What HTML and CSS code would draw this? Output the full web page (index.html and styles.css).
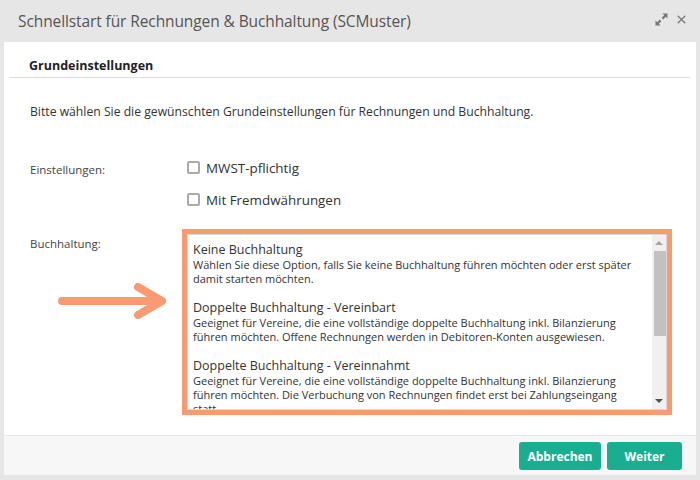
FILE: index.html
```html
<!DOCTYPE html>
<html lang="de">
<head>
<meta charset="utf-8">
<title>Schnellstart</title>
<link rel="stylesheet" href="styles.css">
</head>
<body>
<div class="dialog">
  <div class="titlebar">
    <div class="title">Schnellstart für Rechnungen &amp; Buchhaltung (SCMuster)</div>
    <div class="tools">
      <svg class="ico-max" width="13" height="13" viewBox="0 0 13 13">
        <path d="M7.5 0.5h5v5l-1.7-1.7-2.6 2.6-1.6-1.6 2.6-2.6z" fill="#777"/>
        <path d="M5.5 12.5h-5v-5l1.7 1.7 2.6-2.6 1.6 1.6-2.6 2.6z" fill="#777"/>
      </svg>
      <svg class="ico-close" width="9" height="9" viewBox="0 0 9 9">
        <path d="M0.7 0.7l7.6 7.6M8.3 0.7l-7.6 7.6" stroke="#7a7a7a" stroke-width="1.3"/>
      </svg>
    </div>
  </div>
  <div class="panel">
    <div class="content">
      <div class="section-head">Grundeinstellungen</div>
      <p class="intro">Bitte wählen Sie die gewünschten Grundeinstellungen für Rechnungen und Buchhaltung.</p>
      <div class="form">
        <div class="label">Einstellungen:</div>
        <div class="checks">
          <label class="check"><span class="box"></span>MWST-pflichtig</label>
          <label class="check"><span class="box"></span>Mit Fremdwährungen</label>
        </div>
        <div class="label label-bh">
          <span>Buchhaltung:</span>
          <svg class="arrow" width="112" height="36" viewBox="0 0 112 36">
            <path d="M4 18H104M80 4L104 18L80 32" fill="none" stroke="#f89a72" stroke-width="8" stroke-linecap="round" stroke-linejoin="round"/>
          </svg>
        </div>
        <div class="highlight">
          <div class="listbox">
            <div class="options">
              <div class="opt">
                <div class="opt-title">Keine Buchhaltung</div>
                <div class="opt-desc">Wählen Sie diese Option, falls Sie keine Buchhaltung führen möchten oder erst später damit starten möchten.</div>
              </div>
              <div class="opt">
                <div class="opt-title">Doppelte Buchhaltung - Vereinbart</div>
                <div class="opt-desc">Geeignet für Vereine, die eine vollständige doppelte Buchhaltung inkl. Bilanzierung führen möchten. Offene Rechnungen werden in Debitoren-Konten ausgewiesen.</div>
              </div>
              <div class="opt">
                <div class="opt-title">Doppelte Buchhaltung - Vereinnahmt</div>
                <div class="opt-desc">Geeignet für Vereine, die eine vollständige doppelte Buchhaltung inkl. Bilanzierung führen möchten. Die Verbuchung von Rechnungen findet erst bei Zahlungseingang statt.</div>
              </div>
            </div>
            <div class="scrollbar">
              <div class="sb-btn"><span class="tri-up"></span></div>
              <div class="sb-track"><div class="sb-thumb"></div></div>
              <div class="sb-btn"><span class="tri-down"></span></div>
            </div>
          </div>
        </div>
      </div>
    </div>
    <div class="footer">
      <button class="btn">Abbrechen</button>
      <button class="btn">Weiter</button>
    </div>
  </div>
</div>
</body>
</html>
```

FILE: styles.css
```css
* { box-sizing: border-box; }
html, body { margin: 0; padding: 0; }
body {
  background: #e6e6e6;
  font-family: "Open Sans", "Liberation Sans", sans-serif;
  color: #333;
}
.dialog {
  width: 700px;
  height: 480px;
  display: flex;
  flex-direction: column;
  padding: 0 4px 5px 4px;
}
.titlebar {
  height: 42px;
  display: flex;
  align-items: center;
  justify-content: space-between;
  padding: 0 10px 0 14px;
}
.title {
  font-size: 15.5px;
  color: #555;
  letter-spacing: -0.1px;
}
.tools {
  display: flex;
  align-items: center;
  gap: 9px;
  margin-top: -4px;
}
.panel {
  flex: 1;
  background: #fff;
  display: flex;
  flex-direction: column;
}
.content {
  flex: 1;
  padding: 0 6px 0 5px;
}
.section-head {
  font-weight: bold;
  font-size: 12.5px;
  color: #222;
  padding: 15px 0 3px 20px;
  border-bottom: 1px solid #ddd;
}
.intro {
  margin: 25px 0 0 21px;
  font-size: 12.2px;
  color: #333;
}
.form {
  display: grid;
  grid-template-columns: 152px 490px;
  margin: 41px 0 0 21px;
  row-gap: 20px;
}
.label {
  font-size: 11.5px;
  color: #444;
  padding-top: 1px;
}
.checks {
  display: flex;
  flex-direction: column;
  gap: 13px;
  padding-left: 5px;
  margin-top: -3px;
}
.check {
  display: flex;
  align-items: center;
  font-size: 13.4px;
  color: #333;
  height: 19px;
}
.box {
  width: 13px;
  height: 13px;
  border: 2px solid #aaa;
  border-radius: 2px;
  margin-right: 6px;
}
.label-bh {
  display: flex;
  flex-direction: column;
  padding-top: 7px;
}
.arrow {
  margin: 32px 0 0 28px;
}
.highlight {
  border: 5px solid #f89a72;
  width: 490px;
  height: 186px;
}
.listbox {
  border: 1px solid #d9d9d9;
  height: 100%;
  display: flex;
}
.options {
  flex: 1;
  overflow: hidden;
  padding: 7px 8px 0 5px;
}
.opt { margin-bottom: 14px; }
.opt-title {
  font-size: 12.5px;
  line-height: 16px;
  color: #333;
}
.opt-desc {
  font-size: 11px;
  line-height: 14px;
  color: #333;
}
.scrollbar {
  width: 14px;
  background: #f0f0f0;
  display: flex;
  flex-direction: column;
}
.sb-btn {
  height: 16px;
  display: flex;
  align-items: center;
  justify-content: center;
}
.tri-up {
  width: 0; height: 0;
  border-left: 4px solid transparent;
  border-right: 4px solid transparent;
  border-bottom: 4px solid #a3a3a3;
}
.tri-down {
  width: 0; height: 0;
  border-left: 4px solid transparent;
  border-right: 4px solid transparent;
  border-top: 4px solid #505050;
}
.sb-track {
  flex: 1;
  padding-left: 2px;
}
.sb-thumb {
  height: 85px;
  background: #c1c1c1;
}
.footer {
  height: 40px;
  background: #f7f7f7;
  border-top: 1px solid #e8e8e8;
  display: flex;
  justify-content: flex-end;
  align-items: center;
  gap: 6px;
  padding: 1px 14px 0 0;
}
.btn {
  font-family: "Open Sans", "Liberation Sans", sans-serif;
  font-weight: bold;
  font-size: 12px;
  color: #fff;
  background: #1aae91;
  border: none;
  border-radius: 3px;
  height: 28px;
  width: 82px;
  padding: 0;
}
.btn + .btn { width: 75px; }
```
